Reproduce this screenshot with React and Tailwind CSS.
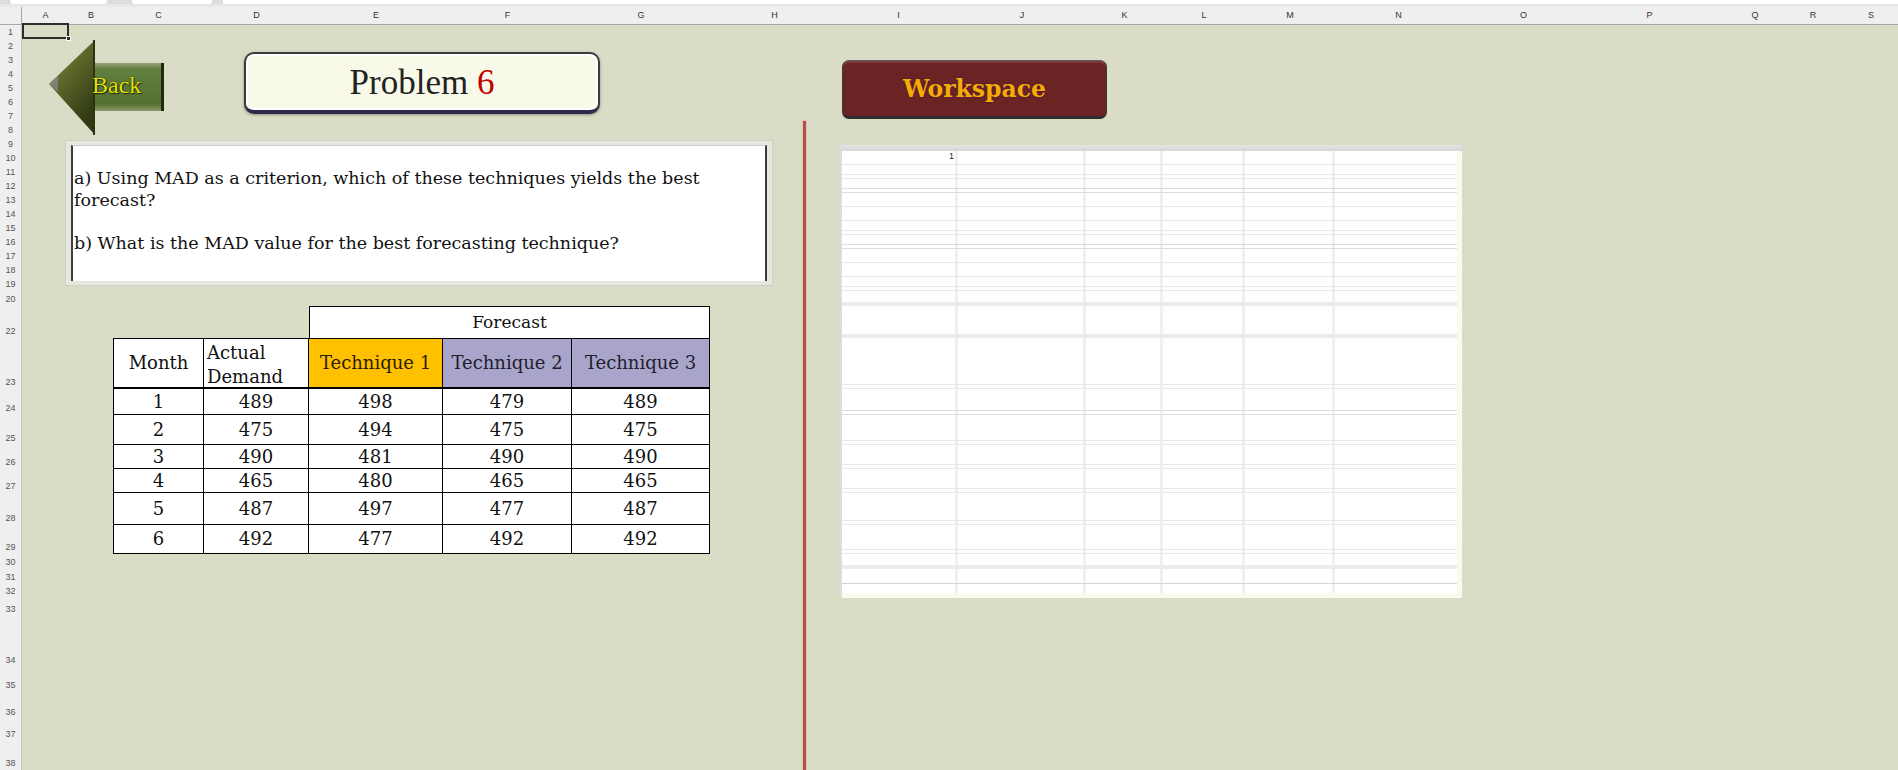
import React from "react";

const COLS = ["A","B","C","D","E","F","G","H","I","J","K","L","M","N","O","P","Q","R","S"];
const ROWS = [1,2,3,4,5,6,7,8,9,10,11,12,13,14,15,16,17,18,19,20,22,23,24,25,26,27,28,29,30,31,32,33,34,35,36,37,38];

const DATA = [
  ["1","489","498","479","489"],
  ["2","475","494","475","475"],
  ["3","490","481","490","490"],
  ["4","465","480","465","465"],
  ["5","487","497","477","487"],
  ["6","492","477","492","492"],
];

const WS_LINES = [
  "col-[1/-1] row-start-2 self-end h-px bg-[#e6e6e6]",
  "col-[1/-1] row-start-3 self-end h-[5px] border-y border-[#e8e8e8]",
  "col-[1/-1] row-start-4 self-end h-[5px] border-y border-[#dcdcdc]",
  "col-[1/-1] row-start-5 self-end h-px bg-[#e6e6e6]",
  "col-[1/-1] row-start-6 self-end h-px bg-[#e6e6e6]",
  "col-[1/-1] row-start-7 self-end h-[5px] border-y border-[#e8e8e8]",
  "col-[1/-1] row-start-8 self-end h-[5px] border-y border-[#dcdcdc]",
  "col-[1/-1] row-start-9 self-end h-px bg-[#e6e6e6]",
  "col-[1/-1] row-start-10 self-end h-px bg-[#e6e6e6]",
  "col-[1/-1] row-start-11 self-end h-[5px] border-y border-[#e8e8e8]",
  "col-[1/-1] row-start-12 self-end h-[4px] bg-[#ebebeb]",
  "col-[1/-1] row-start-13 self-end h-[4px] bg-[#ebebeb]",
  "col-[1/-1] row-start-14 self-end h-[5px] border-y border-[#e8e8e8]",
  "col-[1/-1] row-start-15 self-end h-[5px] border-y border-[#dcdcdc]",
  "col-[1/-1] row-start-16 self-end h-[5px] border-y border-[#e8e8e8]",
  "col-[1/-1] row-start-17 self-end h-[5px] border-y border-[#e8e8e8]",
  "col-[1/-1] row-start-18 self-end h-[5px] border-y border-[#e8e8e8]",
  "col-[1/-1] row-start-19 self-end h-[5px] border-y border-[#e8e8e8]",
  "col-[1/-1] row-start-20 self-end h-[5px] border-y border-[#e8e8e8]",
  "col-[1/-1] row-start-21 self-end h-[4px] bg-[#ececec]",
  "col-[1/-1] row-start-22 self-end h-px bg-[#d4d4d4]",
  "col-[1/-1] row-start-23 self-end h-[5px] bg-[#fafbec]",
];

const WS_VLINES = [
  "col-start-1 row-[2/-1] justify-self-end w-[3px] bg-[#f0f0f0]",
  "col-start-2 row-[2/-1] justify-self-end w-[3px] bg-[#f0f0f0]",
  "col-start-3 row-[2/-1] justify-self-end w-[3px] bg-[#f0f0f0]",
  "col-start-4 row-[2/-1] justify-self-end w-[3px] bg-[#f0f0f0]",
  "col-start-5 row-[2/-1] justify-self-end w-[3px] bg-[#f0f0f0]",
];

function TopStrip() {
  return (
    <div className="h-[7px] bg-[#dcdcdc] flex flex-col">
      <div className="h-[4px] flex">
        <div className="w-[10px]" />
        <div className="w-[97px] bg-white rounded-b-[3px]" />
        <div className="w-[25px]" />
        <div className="w-[80px] bg-white rounded-b-[3px]" />
        <div className="w-[11px]" />
        <div className="flex-1 bg-white" />
      </div>
      <div className="h-[3px] bg-[#e8e8e8]" />
    </div>
  );
}

function BackArrow() {
  return (
    <div className="col-start-2 col-span-3 row-start-3 row-span-7 ml-[26px] mt-[1px] w-[117px] h-[95px] relative self-start justify-self-start">
      <svg width="117" height="95" viewBox="0 0 117 95">
        <defs>
          <linearGradient id="bkHead" x1="0" y1="0" x2="0.6" y2="1">
            <stop offset="0" stopColor="#8d8f5e" />
            <stop offset="0.45" stopColor="#5d6629" />
            <stop offset="1" stopColor="#2f3812" />
          </linearGradient>
          <linearGradient id="bkShaft" x1="0" y1="0" x2="0" y2="1">
            <stop offset="0" stopColor="#9aa47a" />
            <stop offset="0.12" stopColor="#62803f" />
            <stop offset="0.85" stopColor="#53702f" />
            <stop offset="1" stopColor="#8b9a6a" />
          </linearGradient>
        </defs>
        <rect x="45" y="23" width="69" height="48" fill="url(#bkShaft)" />
        <rect x="113" y="23" width="3" height="48" fill="#1f2a0f" />
        <polygon points="1,44 47,0 47,95" fill="url(#bkHead)" />
        <polygon points="1,44 10,36 10,52" fill="#8d8fa6" opacity="0.6" />
        <rect x="45" y="0" width="2" height="95" fill="#2b3310" />
      </svg>
      <span className="absolute left-[44px] top-[33px] font-['Liberation_Serif',serif] text-[24px] leading-none text-[#e4e600] [text-shadow:0_0_1px_#000,1px_1px_1px_#222]">
        Back
      </span>
    </div>
  );
}

function ProblemBox() {
  return (
    <div className="col-start-5 col-span-3 row-start-4 row-span-5 -mt-[1px] ml-[40px] w-[356px] h-[62px] self-start justify-self-start rounded-[10px] border-2 border-[#3a3a3a] border-b-[4px] border-b-[#2c2c4a] bg-[#f8f9e8] shadow-[inset_0_0_0_2px_#ffffff,0_1px_3px_rgba(0,0,0,0.35)] flex items-center justify-center">
      <span className="font-['Liberation_Serif',serif] text-[35px] leading-none text-[#222]">
        Problem <span className="text-[#c00000]">6</span>
      </span>
    </div>
  );
}

function WorkspaceButton() {
  return (
    <div className="col-start-10 col-span-3 row-start-4 row-span-5 ml-[3px] mt-[7px] w-[265px] h-[59px] self-start justify-self-start rounded-[7px] bg-[#6a2424] border border-[#3a3a3a] border-t-[#5c5c6c] border-b-[3px] border-b-[#2e2e2e] shadow-[inset_0_2px_0_#7e3a3a] flex items-center justify-center pt-[2px]">
      <span className="font-['DejaVu_Serif',serif] font-bold text-[23.5px] leading-none text-[#f4ad00] [text-shadow:0_0_2px_#4a1050]">
        Workspace
      </span>
    </div>
  );
}

function QuestionBox() {
  return (
    <div className="col-start-2 col-span-9 row-start-10 row-span-11 mt-[3px] ml-[43px] w-[708px] h-[146px] self-start justify-self-start bg-[#e6e7df] border border-[#cfd0c4] pt-[4px] pb-[4px] pl-[5px] pr-[5px]">
      <div className="h-full bg-white border-l-2 border-r-2 border-[#3c3c3c] border-t border-t-[#cccccc] pt-[22px] pl-[1px] font-['DejaVu_Serif',serif] text-[17.5px] leading-[21.5px] text-[#111]">
        <p>
          a) Using MAD as a criterion, which of these techniques yields the best
          <br />
          forecast?
        </p>
        <p className="mt-[21.5px]">b) What is the MAD value for the best forecasting technique?</p>
      </div>
    </div>
  );
}

function DataTable() {
  const cell = "border-r border-b border-black bg-white flex items-center justify-center";
  return (
    <div className="col-start-4 col-end-9 row-start-22 row-end-30 grid grid-cols-subgrid grid-rows-subgrid font-['DejaVu_Serif',serif] text-[18px] leading-none text-[#111]">
      <div className="col-start-1 col-span-2 row-start-1" />
      <div className="col-start-3 col-span-3 row-start-1 bg-white border-t border-x border-black flex items-center justify-center text-[17px]">
        Forecast
      </div>
      <div className="col-start-1 row-start-2 bg-white border border-b-2 border-black flex items-center justify-center">
        Month
      </div>
      <div className="col-start-2 row-start-2 bg-white border-t border-r border-b-2 border-black pl-[3px] pt-[2px] leading-[24px]">
        Actual
        <br />
        Demand
      </div>
      <div className="col-start-3 row-start-2 bg-[#ffc000] border-t border-r border-b-2 border-black flex items-center justify-center text-[#2a1c00]">
        Technique 1
      </div>
      <div className="col-start-4 row-start-2 bg-[#a9a4c9] border-t border-r border-b-2 border-black flex items-center justify-center text-[#1e1e2e]">
        Technique 2
      </div>
      <div className="col-start-5 row-start-2 bg-[#a9a4c9] border-t border-r border-b-2 border-black flex items-center justify-center text-[#1e1e2e]">
        Technique 3
      </div>
      {DATA.map((row, i) =>
        row.map((v, j) => (
          <div key={i + "-" + j} className={j === 0 ? cell + " border-l" : cell}>
            {v}
          </div>
        ))
      )}
    </div>
  );
}

function Workspace() {
  return (
    <div className="col-start-10 col-end-16 row-start-10 row-end-33 grid grid-cols-subgrid grid-rows-subgrid">
      <div className="col-[1/-1] row-start-1 mt-[8px] bg-gradient-to-b from-[#e4e4e4] to-[#d6d6d6]" />
      <div className="col-[1/-1] row-[2/-1] bg-white" />
      {WS_VLINES.map((c) => (
        <div key={c} className={c} />
      ))}
      {WS_LINES.map((c) => (
        <div key={c} className={c} />
      ))}
      <div className="col-start-1 row-[2/-1] justify-self-start w-[3px] bg-[#dcdcdc]" />
      <div className="col-start-6 row-[2/-1] justify-self-end w-[5px] bg-[#fafbec]" />
      <div className="col-start-1 row-start-2 justify-self-end self-start mr-[4px] mt-[1px] text-[9px] leading-none text-[#222]">
        1
      </div>
    </div>
  );
}

export default function App() {
  return (
    <div className="w-[1898px] h-[770px] overflow-hidden bg-[#dadcc5] font-['Liberation_Sans',sans-serif]">
      <TopStrip />
      <div className="grid grid-cols-[22px_47px_44px_91px_105px_134px_129px_138px_129px_119px_128px_77px_82px_90px_127px_123px_129px_82px_34px_82px] grid-rows-[18px_repeat(19,14px)_15px_32px_51px_26px_30px_24px_24px_32px_29px_15px_15px_14px_18px_51px_25px_27px_22px_29px]">
        <div className="col-start-1 row-start-1 bg-[#efefef] border-b border-r border-[#a8a8a8]" />
        {COLS.map((c) => (
          <div
            key={c}
            className="row-start-1 bg-[#efefef] border-b border-[#a8a8a8] flex items-center justify-center text-[9px] leading-none text-[#333]"
          >
            {c}
          </div>
        ))}
        {ROWS.map((r) => (
          <div
            key={r}
            className="col-start-1 bg-[#efefef] border-r border-[#c9cbb6] flex items-end justify-center pb-[2px] text-[9px] leading-none text-[#555]"
          >
            {r}
          </div>
        ))}
        <div className="col-start-2 row-start-2 -mt-[2px] border-2 border-[#2d2d2d] relative">
          <div className="absolute -right-[4px] -bottom-[4px] w-[5px] h-[5px] bg-[#2d2d2d] border border-white" />
        </div>
        <BackArrow />
        <ProblemBox />
        <WorkspaceButton />
        <div className="col-start-9 row-[8/-1] ml-[93px] mt-[12px] w-[3px] justify-self-start bg-[#a9554c] shadow-[0_0_0_1px_#e6c3b7]" />
        <QuestionBox />
        <DataTable />
        <Workspace />
      </div>
    </div>
  );
}
